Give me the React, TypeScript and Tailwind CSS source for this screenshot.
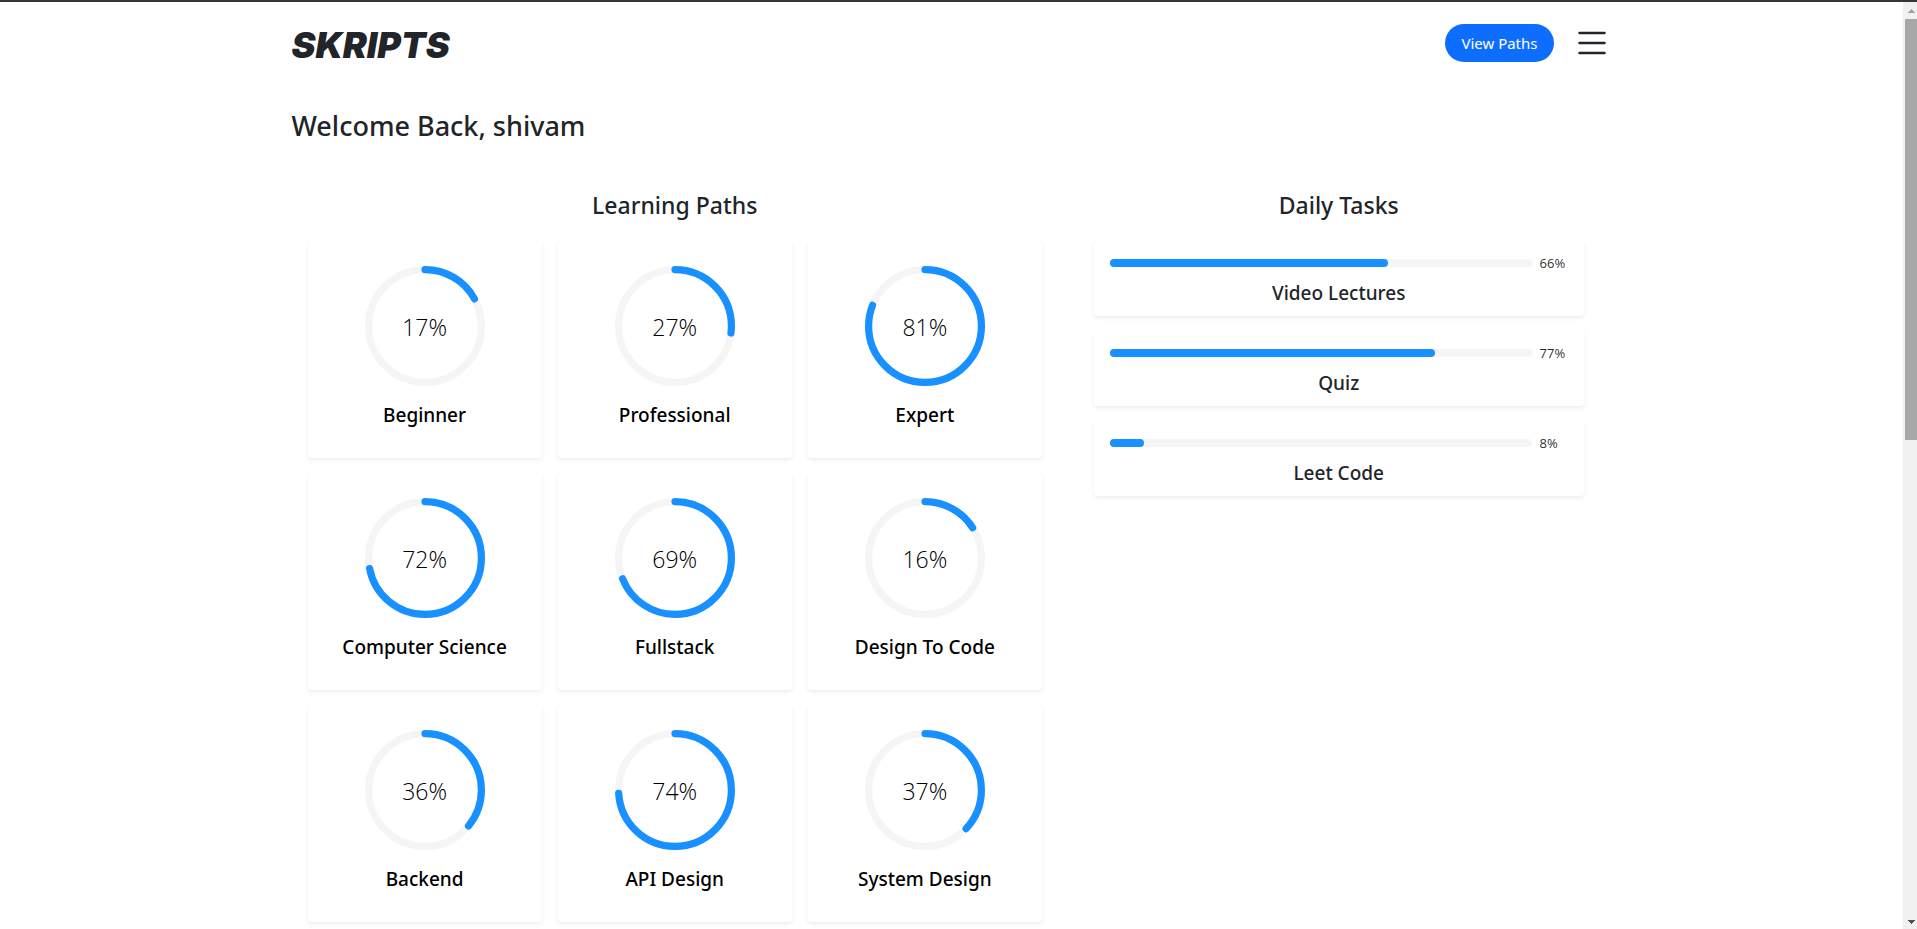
import React from "react";

const paths = [
  { name: "Beginner", percent: 17 },
  { name: "Professional", percent: 27 },
  { name: "Expert", percent: 81 },
  { name: "Computer Science", percent: 72 },
  { name: "Fullstack", percent: 69 },
  { name: "Design To Code", percent: 16 },
  { name: "Backend", percent: 36 },
  { name: "API Design", percent: 74 },
  { name: "System Design", percent: 37 },
];

const tasks = [
  { name: "Video Lectures", percent: 66 },
  { name: "Quiz", percent: 77 },
  { name: "Leet Code", percent: 8 },
];

function ProgressRing({ percent }: { percent: number }) {
  return (
    <div className="grid size-[120px] place-items-center">
      <svg viewBox="0 0 100 100" className="col-start-1 row-start-1 size-full" fill="none" strokeWidth="6" aria-hidden="true">
        <circle cx="50" cy="50" r="47" stroke="#f5f5f5" />
        <circle
          cx="50"
          cy="50"
          r="47"
          stroke="#1890ff"
          strokeLinecap="round"
          pathLength="100"
          strokeDasharray={`${percent} 100`}
          transform="rotate(-90 50 50)"
        />
      </svg>
      <span className="col-start-1 row-start-1 pt-0.5 text-[23px] leading-8 font-light text-black">{percent}%</span>
    </div>
  );
}

function PathCard({ name, percent }: { name: string; percent: number }) {
  return (
    <a href="#" className="flex flex-col items-center rounded bg-white pt-[25px] pb-[31px] text-black shadow-[0_2px_4px_rgba(0,0,0,0.075)]">
      <ProgressRing percent={percent} />
      <h3 className="mt-[17px] font-['Noto_Sans',sans-serif] text-[19px] leading-6 font-medium">{name}</h3>
    </a>
  );
}

function TaskCard({ name, percent }: { name: string; percent: number }) {
  return (
    <div className="rounded bg-white px-4 pt-[11px] pb-[11px] shadow-[0_2px_4px_rgba(0,0,0,0.075)]">
      <div className="flex items-center gap-2">
        <div className="h-2 flex-1 rounded-full bg-[#f5f5f5]">
          <div className="h-2 rounded-full bg-[#1890ff]" style={{ width: `${percent}%` }} />
        </div>
        <span className="w-7 text-[13px] leading-[22px] text-black/85">{percent}%</span>
      </div>
      <h3 className="mt-[7px] text-center font-['Noto_Sans',sans-serif] text-[19px] leading-6 font-medium">{name}</h3>
    </div>
  );
}

function ScrollBar() {
  return (
    <div className="sticky top-0 flex h-[calc(100vh-2px)] w-3.5 flex-col items-end bg-[#f1f1f1]" aria-hidden="true">
      <svg viewBox="0 0 12 17" className="h-[17px] w-3" shapeRendering="crispEdges">
        <path d="M3 11h7v-1H9V9H8V8H7V7H6v1H5v1H4v1H3z" fill="#a3a3a3" />
      </svg>
      <div className="h-[421px] w-3 bg-[#a8a8a8]" />
      <svg viewBox="0 0 12 17" className="mt-auto h-[17px] w-3" shapeRendering="crispEdges">
        <path d="M3 8h7v1H9v1H8v1H7v1H6v-1H5v-1H4V9H3z" fill="#505050" />
      </svg>
    </div>
  );
}

export default function App() {
  return (
    <div className="min-h-screen bg-white font-['Open_Sans','Noto_Sans',sans-serif] text-[#212529]">
      <div className="h-0.5 bg-[#38363a]" />
      <div className="flex items-start">
        <div className="min-w-0 flex-1">
          <div className="mx-auto max-w-[1320px]">
            <header className="flex items-center justify-between pt-[21px]">
              <a href="#" className="pt-1 font-[Inter,sans-serif] text-4xl leading-9 font-black italic">
                SKRIPTS
              </a>
              <div className="flex items-center gap-[18px]">
                <button type="button" className="h-[38px] rounded-full bg-[#0d6efd] px-4 font-['Noto_Sans',sans-serif] text-[15px] text-white">
                  View Paths
                </button>
                <button type="button" aria-label="Open menu">
                  <svg viewBox="0 0 16 16" className="size-10" fill="none" stroke="currentColor" strokeLinecap="round" aria-hidden="true">
                    <path d="M3 4h10M3 8h10M3 12h10" />
                  </svg>
                </button>
              </div>
            </header>
            <h1 className="mt-[45px] font-['Noto_Sans',sans-serif] text-[27px] leading-9 font-medium">Welcome Back, shivam</h1>
            <main className="mt-[45px] grid grid-cols-[3fr_2fr] items-start gap-13 pr-7 pb-4 pl-4">
              <section>
                <h2 className="text-center font-['Noto_Sans',sans-serif] text-[23px] leading-8 font-medium">Learning Paths</h2>
                <div className="mt-5 grid grid-cols-3 gap-x-4 gap-y-[15px]">
                  {paths.map((path) => (
                    <PathCard key={path.name} {...path} />
                  ))}
                </div>
              </section>
              <section>
                <h2 className="text-center font-['Noto_Sans',sans-serif] text-[23px] leading-8 font-medium">Daily Tasks</h2>
                <div className="mt-5 flex flex-col gap-[15px]">
                  {tasks.map((task) => (
                    <TaskCard key={task.name} {...task} />
                  ))}
                </div>
              </section>
            </main>
          </div>
        </div>
        <ScrollBar />
      </div>
    </div>
  );
}
